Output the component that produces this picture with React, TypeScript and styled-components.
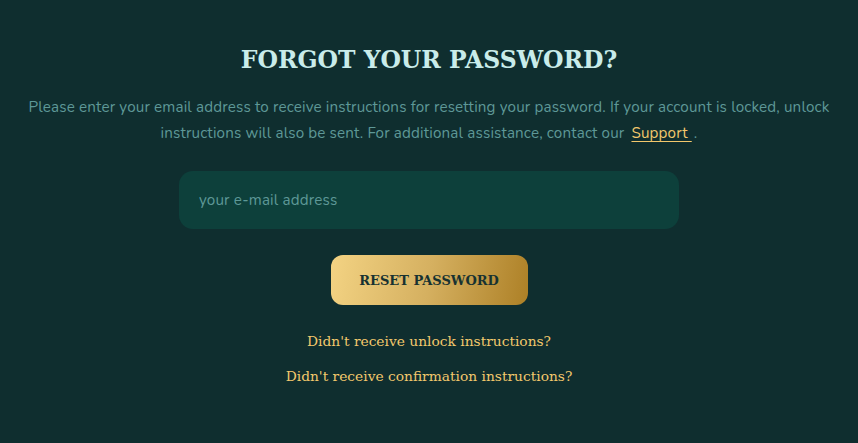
import styled, { createGlobalStyle } from 'styled-components';

const GlobalStyle = createGlobalStyle`
  html, body {
    margin: 0;
    padding: 0;
    background-color: #0f2e2f;
  }
  #root {
    min-height: 100vh;
  }
`;

const Page = styled.main`
  min-height: 100vh;
  box-sizing: border-box;
  padding: 42px 20px 0;
  display: flex;
  flex-direction: column;
  align-items: center;
  background-color: #0f2e2f;
`;

const Title = styled.h1`
  margin: 0;
  font-family: "DejaVu Serif", "Liberation Serif", serif;
  font-size: 23.5px;
  line-height: 36px;
  font-weight: 700;
  color: #c9ecea;
`;

const Intro = styled.p`
  margin: 16px 0 0;
  max-width: 818px;
  text-align: center;
  font-family: "Nunito", "Lato", "Open Sans", sans-serif;
  font-size: 15.2px;
  line-height: 26px;
  letter-spacing: 0.15px;
  color: #5e9897;
`;

const SupportLink = styled.a`
  color: #f2c86c;
  text-decoration: underline;
  text-underline-offset: 3px;
  margin: 0 2px 0 7px;
  cursor: pointer;
`;

const Form = styled.form`
  margin-top: 25px;
  display: flex;
  flex-direction: column;
  align-items: center;
`;

const EmailInput = styled.input`
  width: 500px;
  height: 58px;
  box-sizing: border-box;
  padding: 0 20px;
  border: none;
  border-radius: 14px;
  background-color: #0d403b;
  color: #c9ecea;
  font-family: "Nunito", "Lato", "Open Sans", sans-serif;
  font-size: 15.2px;
  letter-spacing: 0.15px;
  outline: none;

  &::placeholder {
    color: #5e9897;
  }
`;

const ResetButton = styled.button`
  margin-top: 26px;
  width: 197px;
  height: 50px;
  border: none;
  border-radius: 12px;
  background: linear-gradient(100deg, #f3d383 0%, #d5b060 50%, #ad8026 100%);
  color: #173231;
  font-family: "DejaVu Serif", "Liberation Serif", serif;
  font-size: 13px;
  font-weight: 700;
  cursor: pointer;
`;

const Links = styled.div`
  margin-top: 25px;
  display: flex;
  flex-direction: column;
  align-items: center;
  gap: 13px;
`;

const HelpLink = styled.a`
  font-family: "DejaVu Serif", "Liberation Serif", serif;
  font-size: 13.8px;
  line-height: 22px;
  color: #f2c86c;
  text-decoration: none;
  cursor: pointer;
`;

export default function App() {
  return (
    <>
      <GlobalStyle />
      <Page>
        <Title>FORGOT YOUR PASSWORD?</Title>
        <Intro>
          Please enter your email address to receive instructions for resetting your password. If your account is locked, unlock
          instructions will also be sent. For additional assistance, contact our
          <SupportLink>Support </SupportLink>.
        </Intro>
        <Form onSubmit={(e) => e.preventDefault()}>
          <EmailInput type="email" placeholder="your e-mail address" />
          <ResetButton type="submit">RESET PASSWORD</ResetButton>
        </Form>
        <Links>
          <HelpLink>Didn't receive unlock instructions?</HelpLink>
          <HelpLink>Didn't receive confirmation instructions?</HelpLink>
        </Links>
      </Page>
    </>
  );
}
